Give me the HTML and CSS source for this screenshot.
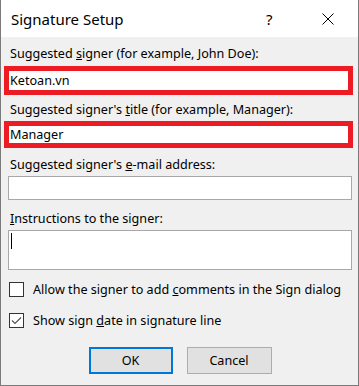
FILE: index.html
```html
<!DOCTYPE html>
<html lang="en">
<head>
    <meta charset="UTF-8">
    <title>Signature Setup</title>
    <link rel="stylesheet" href="styles.css">
</head>
<body>
    <div class="dialog">
        <div class="titlebar">
            <span class="title">Signature Setup</span>
            <span class="help">?</span>
            <svg class="close" width="12" height="12" viewBox="0 0 12 12">
                <path d="M0.5 0.5 L11.5 11.5 M11.5 0.5 L0.5 11.5" stroke="#000" stroke-width="1"/>
            </svg>
        </div>

        <div class="content">
            <label class="label first">Suggested <u>s</u>igner (for example, John Doe):</label>
            <div class="field marked tall">Ketoan.vn</div>

            <label class="label second">Suggested signer's <u>t</u>itle (for example, Manager):</label>
            <div class="field marked">Manager</div>

            <label class="label third">Suggested signer's <u>e</u>-mail address:</label>
            <div class="field plain"></div>

            <label class="label fourth"><u>I</u>nstructions to the signer:</label>
            <div class="field area"><span class="caret"></span></div>

            <div class="check-row first-check">
                <span class="box"></span>
                <span>Allow the signer to add <u>c</u>omments in the Sign dialog</span>
            </div>
            <div class="check-row second-check">
                <span class="box">
                    <svg width="13" height="13" viewBox="0 0 13 13">
                        <path d="M2 6.5 L5 9.5 L11 3.5" fill="none" stroke="#555" stroke-width="1.2"/>
                    </svg>
                </span>
                <span>Show sign <u>d</u>ate in signature line</span>
            </div>

            <div class="buttons">
                <button class="btn default">OK</button>
                <button class="btn">Cancel</button>
            </div>
        </div>
    </div>
</body>
</html>
```

FILE: styles.css
```css
body {
    margin: 0;
    background-color: #fff;
    font-family: "Noto Sans", "Open Sans", sans-serif;
    font-size: 12.6px;
    color: #000;
}

.dialog {
    width: 359px;
    height: 386px;
    box-sizing: border-box;
    border: 1px solid #7a7a7a;
    border-top: none;
    background-color: #f0f0f0;
    overflow: hidden;
}

.titlebar {
    height: 37px;
    background-color: #fff;
    display: flex;
    align-items: center;
    padding-left: 10px;
}

.title {
    font-size: 15px;
    flex: 1;
    padding-top: 1px;
}

.help {
    font-size: 15px;
    width: 10px;
    margin-right: 46px;
}

.close {
    margin-right: 24px;
}

.content {
    padding: 0 6px 0 7px;
}

.label {
    display: block;
    line-height: 16px;
    padding-left: 2px;
}

.first { margin-top: 9px; }
.second { margin-top: 7px; }
.third { margin-top: 9px; }
.fourth { margin-top: 11px; }

.field {
    background-color: #fff;
    box-sizing: border-box;
    margin-top: 3px;
}

.marked {
    border: 5px solid #ed1c24;
    margin-left: -4px;
    margin-right: -1px;
    height: 27px;
    line-height: 17px;
    padding-left: 1px;
    font-size: 12.6px;
}

.tall {
    height: 29px;
    margin-top: 4px;
    line-height: 19px;
}

.plain {
    border: 1px solid #a8a8a8;
    height: 24px;
}

.area {
    border: 1px solid #a8a8a8;
    height: 40px;
    padding: 2px 0 0 2px;
}

.caret {
    display: block;
    width: 1px;
    height: 16px;
    background-color: #000;
}

.check-row {
    display: flex;
    align-items: center;
    gap: 9px;
    height: 15px;
    padding-left: 1px;
}

.first-check { margin-top: 12px; }
.second-check { margin-top: 16px; }

.box {
    width: 15px;
    height: 15px;
    box-sizing: border-box;
    border: 1px solid #333;
    background-color: #fff;
    display: flex;
    align-items: center;
    justify-content: center;
}

.buttons {
    display: flex;
    justify-content: center;
    gap: 14px;
    margin-top: 19px;
}

.btn {
    width: 85px;
    height: 27px;
    box-sizing: border-box;
    border: 1px solid #adadad;
    background-color: #e1e1e1;
    font-family: inherit;
    font-size: 12.6px;
    color: #000;
    padding: 0;
}

.default {
    width: 84px;
    border: 2px solid #0078d7;
}
```
